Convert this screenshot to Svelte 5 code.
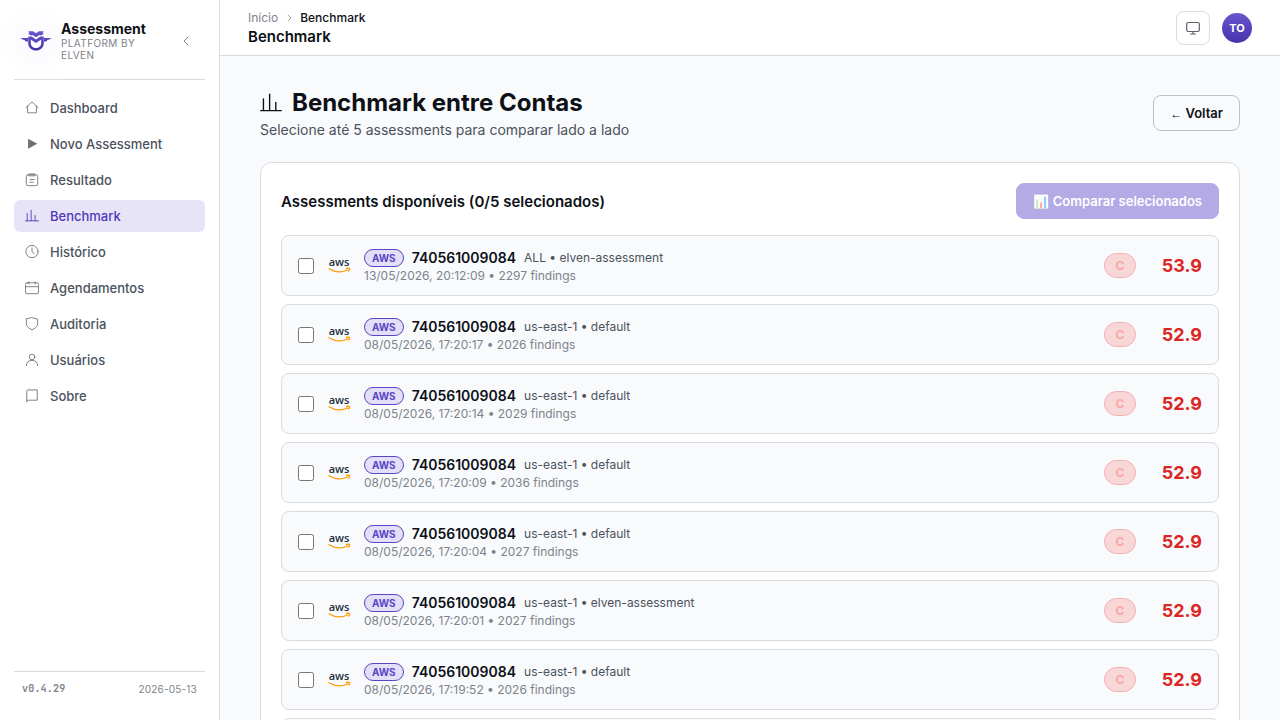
<script lang="ts">
  interface Assessment {
    account: string
    scope: string
    date: string
    findings: number
    score: string
  }

  const nav = [
    { label: 'Dashboard', icon: 'home' },
    { label: 'Novo Assessment', icon: 'play' },
    { label: 'Resultado', icon: 'clipboard' },
    { label: 'Benchmark', icon: 'chart' },
    { label: 'Histórico', icon: 'clock' },
    { label: 'Agendamentos', icon: 'calendar' },
    { label: 'Auditoria', icon: 'shield' },
    { label: 'Usuários', icon: 'user' },
    { label: 'Sobre', icon: 'book' },
  ]

  const account = '740561009084'
  const assessments: Assessment[] = [
    { account, scope: 'ALL • elven-assessment', date: '13/05/2026, 20:12:09', findings: 2297, score: '53.9' },
    { account, scope: 'us-east-1 • default', date: '08/05/2026, 17:20:17', findings: 2026, score: '52.9' },
    { account, scope: 'us-east-1 • default', date: '08/05/2026, 17:20:14', findings: 2029, score: '52.9' },
    { account, scope: 'us-east-1 • default', date: '08/05/2026, 17:20:09', findings: 2036, score: '52.9' },
    { account, scope: 'us-east-1 • default', date: '08/05/2026, 17:20:04', findings: 2027, score: '52.9' },
    { account, scope: 'us-east-1 • elven-assessment', date: '08/05/2026, 17:20:01', findings: 2027, score: '52.9' },
    { account, scope: 'us-east-1 • default', date: '08/05/2026, 17:19:52', findings: 2026, score: '52.9' },
    { account, scope: 'us-east-1 • default', date: '08/05/2026, 17:19:48', findings: 2026, score: '52.9' },
  ]

  const max = 5
  let active = $state('Benchmark')
  let selected: number[] = $state([])
</script>

{#snippet icon(name: string)}
  <svg class="icon" viewBox="0 0 16 16" aria-hidden="true">
    {#if name === 'home'}
      <path d="M1 7.500 8 1l7 6.500M3 6v7.500h10V6" />
    {:else if name === 'play'}
      <path class="solid" d="M3.500 2v11.500L14 7.800z" />
    {:else if name === 'clipboard'}
      <rect x="1.500" y="2" width="13" height="12.500" rx="2" />
      <path d="M5 2V1h6v1M4.500 3.200h7M6 7.500h4.500M5.500 10.500h4" />
    {:else if name === 'chart'}
      <path d="M.5 13.500h15M2.500 13.500V5M7 13.500V1.500M11.500 13.500V7.500" />
    {:else if name === 'clock'}
      <circle cx="8" cy="7.500" r="7" />
      <path d="M8 3.500v4.200l2.500 2" />
    {:else if name === 'calendar'}
      <rect x=".5" y="2" width="15" height="12.500" rx="2" />
      <path d="M.5 6.500h15M4.500 1v2.500M11.500 1v2.500" />
    {:else if name === 'shield'}
      <path d="M8 .8 14.500 2.500v5.500c0 3-3 5-6.500 6.500-3.500-1.500-6.500-3.500-6.500-6.500V2.500z" />
    {:else if name === 'user'}
      <circle cx="8" cy="4.500" r="3.200" />
      <path d="M1.500 14.500c0-3.800 2.500-6 6.500-6s6.500 2.200 6.500 6" />
    {:else if name === 'book'}
      <path d="M2 14.500V2.500c0-.8.500-1.500 1.300-1.500H14v11.800H3.500c-.9 0-1.500.5-1.500 1.200" />
    {/if}
  </svg>
{/snippet}

<div class="shell">
  <aside class="sidebar">
    <div class="brand">
      <svg class="logo" viewBox="0 0 32 22" aria-hidden="true">
        <defs>
          <linearGradient id="owl" x1="0" y1="0" x2="0" y2="1">
            <stop offset="0" stop-color="#6a55cf" />
            <stop offset="1" stop-color="#4632ab" />
          </linearGradient>
        </defs>
        <path
          fill="url(#owl)"
          fill-rule="evenodd"
          d="M8.300 1.300H13l3 2 3-2h4.700L22.500 3.300H24L22 5.300h-3l-3 1.900-3-1.900h-3L8 3.300h1.500zM.5 8H8v3.500H6.500c-.8 0-1.300-.4-1.800-1.300C3.500 9.800 1.700 9.300.5 8zM31.500 8H24v3.500h1.500c.8 0 1.300-.4 1.800-1.300 1.200-.4 3-.9 4.200-2.200zM8.200 6.500h3.500L16 9.500l4.300-3h3.500v6.800c0 4.300-3.500 7.300-7.800 7.300s-7.800-3-7.800-7.300zM10.800 9.500v3.800c0 2.900 2.300 4.800 5.200 4.800s5.200-1.900 5.200-4.800V9.500L16 13z"
        />
      </svg>
      <div class="brand-text">
        <strong>Assessment</strong>
        <span>PLATFORM BY ELVEN</span>
      </div>
      <button class="collapse" aria-label="Recolher menu">
        <svg viewBox="0 0 12 12" aria-hidden="true"><path d="M8 2 4 6l4 4" /></svg>
      </button>
    </div>

    <nav>
      {#each nav as item}
        <a
          href="#{item.icon}"
          class:active={active === item.label}
          onclick={() => (active = item.label)}
        >
          {@render icon(item.icon)}
          {item.label}
        </a>
      {/each}
    </nav>

    <div class="version">
      <b>v0.4.29</b>
      <span>2026-05-13</span>
    </div>
  </aside>

  <div class="page">
    <header class="topbar">
      <div class="crumbs">
        <div class="trail">
          <a href="#inicio">Início</a>
          <svg viewBox="0 0 10 10" aria-hidden="true"><path d="M4 2 7 5l-3 3" /></svg>
          <span>Benchmark</span>
        </div>
        <div class="current">Benchmark</div>
      </div>
      <button class="theme" aria-label="Tema">
        <svg viewBox="0 0 16 16" aria-hidden="true">
          <rect x="1.700" y="2.500" width="12.600" height="9" rx="1.500" />
          <path d="M8 11.500V14M5.500 14h5" />
        </svg>
      </button>
      <button class="avatar">TO</button>
    </header>

    <main>
      <div class="heading">
        <div>
          <h1>{@render icon('chart')}Benchmark entre Contas</h1>
          <p>Selecione até 5 assessments para comparar lado a lado</p>
        </div>
        <button class="back"><span class="arrow">←</span> Voltar</button>
      </div>

      <section class="card">
        <div class="card-head">
          <h2>Assessments disponíveis ({selected.length}/{max} selecionados)</h2>
          <button class="compare" disabled={selected.length < 2}>📊 Comparar selecionados</button>
        </div>

        <div class="list">
          {#each assessments as item, i}
            <label class="row">
              <input
                type="checkbox"
                value={i}
                bind:group={selected}
                disabled={selected.length >= max && !selected.includes(i)}
              />
              <svg class="aws" viewBox="0 0 26 26" aria-hidden="true">
                <text x="13" y="13" text-anchor="middle">aws</text>
                <path d="M3 15.800C9 19.500 16 19.600 21.500 17" />
                <path d="M20.500 15.500c1.500-.4 2.800-.4 3.100 0 .3.400-.1 1.500-1 2.500" />
              </svg>
              <div class="info">
                <div class="line">
                  <span class="provider">AWS</span>
                  <strong>{item.account}</strong>
                  <span class="scope">{item.scope}</span>
                </div>
                <div class="meta">{item.date} • {item.findings} findings</div>
              </div>
              <span class="grade">C</span>
              <span class="score">{item.score}</span>
            </label>
          {/each}
        </div>
      </section>
    </main>
  </div>
</div>

<style>
  :global(body) {
    margin: 0;
    background: #f8fafc;
    color: #0d1117;
    font-family: Inter, 'Liberation Sans', sans-serif;
    font-size: 14px;
  }

  * {
    box-sizing: border-box;
  }

  button {
    font-family: inherit;
    cursor: pointer;
  }

  a {
    color: inherit;
    text-decoration: none;
  }

  svg {
    flex: none;
    fill: none;
    stroke: currentColor;
    stroke-linecap: round;
    stroke-linejoin: round;
  }

  .shell {
    display: flex;
    align-items: flex-start;
  }

  .sidebar {
    position: sticky;
    top: 0;
    flex: none;
    display: flex;
    flex-direction: column;
    width: 220px;
    height: 100vh;
    padding: 20px 14px;
    background: #fff;
    border-right: 1px solid #d8dbe0;
  }

  .brand {
    display: flex;
    align-items: center;
    gap: 9px;
    height: 60px;
    padding: 0 8px 18px 6px;
    border-bottom: 1px solid #d8dbe0;
  }

  .logo {
    width: 32px;
    height: 22px;
    stroke: none;
    border-radius: 50%;
    box-shadow: 0 0 24px 12px #fbfaff;
    background: #fcfbff;
  }

  .brand-text {
    flex: 1;
    min-width: 0;
  }

  .brand-text strong {
    display: block;
    font-size: 14px;
    font-weight: 700;
    line-height: 17px;
  }

  .brand-text span {
    display: block;
    color: #7d838c;
    font-size: 10px;
    line-height: 12px;
    letter-spacing: 0.4px;
  }

  .collapse {
    display: flex;
    padding: 5px;
    color: #7d838c;
    background: none;
    border: 0;
  }

  .collapse svg {
    width: 12px;
    height: 12px;
  }

  nav {
    flex: 1;
    display: flex;
    flex-direction: column;
    gap: 4px;
    padding-top: 12px;
  }

  nav a {
    display: flex;
    align-items: center;
    gap: 11px;
    height: 32px;
    padding: 0 11px;
    color: #4b525c;
    font-size: 13px;
    font-weight: 500;
    border-radius: 6px;
  }

  nav a.active {
    color: #4f38b8;
    background: #e8e4f8;
  }

  .icon {
    width: 14px;
    height: 14px;
  }

  nav a:not(.active) .icon {
    color: #6b7079;
  }

  .solid {
    fill: currentColor;
    stroke: none;
  }

  .version {
    display: flex;
    align-items: center;
    justify-content: space-between;
    padding: 9px 8px 3px;
    color: #7d838c;
    font-size: 10px;
    line-height: 16px;
    letter-spacing: 0.2px;
    border-top: 1px solid #d8dbe0;
  }

  .version b {
    font-family: 'JetBrains Mono', 'Liberation Mono', monospace;
  }

  .page {
    flex: 1;
    min-width: 0;
  }

  .topbar {
    position: sticky;
    top: 0;
    z-index: 1;
    display: flex;
    align-items: center;
    gap: 12px;
    height: 56px;
    padding: 0 28px;
    background: #fff;
    border-bottom: 1px solid #d8dbe0;
  }

  .crumbs {
    flex: 1;
  }

  .trail {
    display: flex;
    align-items: center;
    gap: 6px;
    font-size: 12px;
    font-weight: 500;
    line-height: 18px;
  }

  .trail a {
    color: #7d838c;
    font-weight: 400;
  }

  .trail svg {
    width: 10px;
    height: 10px;
    color: #9da2aa;
  }

  .current {
    font-size: 15px;
    font-weight: 600;
    line-height: 20px;
  }

  .theme {
    display: flex;
    align-items: center;
    justify-content: center;
    width: 34px;
    height: 34px;
    padding: 0;
    color: #5b616a;
    background: #fff;
    border: 1px solid #d8dbe0;
    border-radius: 8px;
  }

  .theme svg {
    width: 16px;
    height: 16px;
    stroke-width: 1.2;
  }

  .avatar {
    width: 30px;
    height: 30px;
    padding: 0;
    color: #fff;
    font-size: 11px;
    font-weight: 700;
    background: linear-gradient(#6a55cf, #4632ab);
    border: 0;
    border-radius: 50%;
  }

  main {
    padding: 32px 40px;
  }

  .heading {
    display: flex;
    align-items: center;
    justify-content: space-between;
    margin-bottom: 24px;
  }

  h1 {
    display: flex;
    align-items: center;
    gap: 10px;
    margin: 0 0 4px;
    font-size: 24px;
    font-weight: 700;
    line-height: 30px;
  }

  h1 .icon {
    width: 22px;
    height: 22px;
  }

  .heading p {
    margin: 0;
    color: #4b525c;
    font-size: 14px;
    line-height: 16px;
  }

  .back,
  .compare {
    height: 36px;
    padding: 0 16px;
    font-size: 13px;
    font-weight: 600;
    border-radius: 8px;
  }

  .back {
    color: #0d1117;
    background: none;
    border: 1px solid #bcc0c8;
  }

  .arrow {
    font-family: 'Liberation Serif', serif;
    font-size: 12px;
    font-weight: 400;
  }

  .compare {
    color: #fff;
    background: #5a45c8;
    border: 1px solid #5a45c8;
  }

  .compare:disabled {
    opacity: 0.45;
    cursor: not-allowed;
  }

  .card {
    padding: 20px;
    background: #fff;
    border: 1px solid #d8dbe0;
    border-radius: 12px;
  }

  .card-head {
    display: flex;
    align-items: center;
    justify-content: space-between;
    margin-bottom: 16px;
  }

  h2 {
    margin: 0;
    font-size: 15px;
    font-weight: 600;
  }

  .list {
    display: flex;
    flex-direction: column;
    gap: 8px;
  }

  .row {
    display: flex;
    align-items: center;
    gap: 12px;
    padding: 10px 16px;
    background: #f8fafc;
    border: 1px solid #d8dbe0;
    border-radius: 8px;
    cursor: pointer;
  }

  .row input {
    width: 16px;
    height: 16px;
    margin: 0;
  }

  .aws {
    width: 26px;
    height: 26px;
    stroke: #f90;
    stroke-width: 1.3;
  }

  .aws text {
    fill: #252f3e;
    stroke: none;
    font-family: 'Open Sans', sans-serif;
    font-size: 11px;
    font-weight: 600;
  }

  .info {
    flex: 1;
    padding-top: 2px;
  }

  .line {
    display: flex;
    align-items: center;
    gap: 8px;
    height: 19px;
  }

  .provider {
    padding: 0 7px;
    color: #5a45c8;
    font-size: 10px;
    font-weight: 700;
    line-height: 16px;
    background: #e3dff6;
    border: 1px solid #5a45c8;
    border-radius: 9px;
  }

  .line strong {
    font-size: 14px;
    font-weight: 600;
  }

  .scope {
    color: #4b525c;
    font-size: 12px;
  }

  .meta {
    color: #7d838c;
    font-size: 12px;
    line-height: 18px;
  }

  .grade {
    width: 32px;
    color: #fca5a5;
    font-size: 12px;
    font-weight: 700;
    line-height: 23px;
    text-align: center;
    background: #f8d7d9;
    border: 1px solid #f8adb0;
    border-radius: 13px;
  }

  .score {
    min-width: 54px;
    color: #dc2626;
    font-size: 18px;
    font-weight: 700;
    text-align: right;
  }
</style>
